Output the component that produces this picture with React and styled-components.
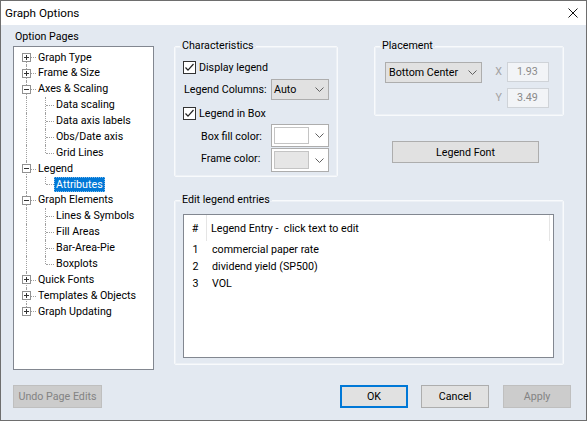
import React from 'react';
import styled, { createGlobalStyle } from 'styled-components';

const Global = createGlobalStyle`
  html, body { margin: 0; padding: 0; background: #fff; }
  body { font-family: Roboto, "Noto Sans", sans-serif; font-size: 10.7px; color: #000; }
  * { box-sizing: border-box; }
`;

const Window = styled.div`
  width: 587px;
  height: 421px;
  display: flex;
  flex-direction: column;
  border: 1px solid #6e6e6e;
  background: #e3e9f1;
  overflow: hidden;
  white-space: nowrap;
`;

const TitleBar = styled.div`
  flex: none;
  height: 24px;
  background: #fff;
  display: flex;
  align-items: center;
  justify-content: space-between;
  padding: 0 8px 0 4px;
`;

const TitleText = styled.span`
  font-size: 11.7px;
  line-height: 16px;
`;

const Content = styled.div`
  flex: 1;
  display: flex;
  flex-direction: column;
  padding: 4px 14px 0 12px;
`;

const Main = styled.div`
  display: grid;
  grid-template-columns: 141px 390px;
  column-gap: 20px;
  align-items: start;
`;

const LeftCol = styled.div`
  display: flex;
  flex-direction: column;
`;

const PageLabel = styled.div`
  line-height: 16px;
  height: 16px;
  margin: 0 0 1px 2px;
`;

const TreePanel = styled.div`
  height: 324px;
  background: #fff;
  border: 1px solid #828790;
  padding-top: 2.5px;
`;

const TreeRow = styled.div`
  display: flex;
  align-items: stretch;
  height: 15.875px;
`;

const Guide = styled.span`
  position: relative;
  flex: none;
  width: ${(p) => p.$w}px;
  &::before {
    content: '';
    display: ${(p) => (p.$v === 'none' ? 'none' : 'block')};
    position: absolute;
    left: ${(p) => p.$x}px;
    top: ${(p) => (p.$v === 'bottom' ? '50%' : '0')};
    bottom: ${(p) => (p.$v === 'top' ? '50%' : '0')};
    border-left: 1px dotted #a0a0a0;
  }
  &::after {
    content: '';
    display: ${(p) => (p.$h ? 'block' : 'none')};
    position: absolute;
    left: ${(p) => p.$x + 1}px;
    right: 0;
    top: 50%;
    border-top: 1px dotted #a0a0a0;
  }
`;

const ExpanderBox = styled.svg`
  position: absolute;
  left: 8px;
  top: calc(50% - 4.5px);
  z-index: 1;
`;

const TreeLabel = styled.span`
  line-height: 16px;
  padding: 0 2px;
  white-space: nowrap;
  color: ${(p) => (p.$sel ? '#fff' : '#000')};
  background: ${(p) => (p.$sel ? '#0078d7' : 'transparent')};
  outline: ${(p) => (p.$sel ? '1px dotted #7fbbea' : 'none')};
  outline-offset: -1px;
`;

const RightCol = styled.div`
  margin-top: 10px;
  display: flex;
  flex-direction: column;
`;

const TopRow = styled.div`
  display: flex;
  align-items: flex-start;
  gap: 36px;
`;

const Group = styled.fieldset`
  margin: 0;
  padding: 0;
  min-width: 0;
  width: ${(p) => p.$w}px;
  border: 1px solid #f8fafc;
  border-radius: 2px;
  box-shadow: inset 0 0 0 1px #edf1f6;
`;

const GroupTitle = styled.legend`
  margin-left: 5px;
  padding: 0 2px;
  line-height: 14px;
`;

const GroupBody = styled.div`
  display: flex;
  flex-direction: column;
  padding: ${(p) => p.$pad};
`;

const CheckRow = styled.label`
  display: flex;
  align-items: center;
  gap: 3px;
  height: 16px;
  margin-top: ${(p) => p.$mt || 0}px;
`;

const FieldRow = styled.div`
  display: flex;
  align-items: center;
  height: ${(p) => p.$h}px;
  margin-top: ${(p) => p.$mt || 0}px;
  padding-left: ${(p) => p.$pl || 0}px;
`;

const FieldLabel = styled.span`
  width: ${(p) => p.$w}px;
  flex: none;
  line-height: 16px;
  margin-top: ${(p) => p.$dy || 0}px;
`;

const Select = styled.div`
  display: flex;
  align-items: center;
  justify-content: space-between;
  width: ${(p) => p.$w}px;
  height: 21px;
  background: #e1e1e1;
  border: 1px solid #adadad;
  padding: 0 4px 0 ${(p) => p.$pl}px;
  line-height: 16px;
`;

const ColorCombo = styled.div`
  display: flex;
  align-items: center;
  justify-content: space-between;
  width: 58px;
  height: ${(p) => p.$h}px;
  background: #fff;
  border: 1px solid #adadad;
  padding: 0 4px 0 2px;
`;

const Swatch = styled.div`
  width: 35px;
  height: ${(p) => p.$h}px;
  background: ${(p) => p.$c};
  border: 1px solid #c4c4c4;
`;

const PlaceGrid = styled.div`
  display: grid;
  grid-template-columns: 97px 25px 42px;
  grid-template-rows: 20px 20px;
  row-gap: 6px;
  align-items: start;
`;

const PlaceSelect = styled(Select)`
  grid-column: 1;
  grid-row: 1;
`;

const AxisLabel = styled.span`
  grid-column: 2;
  grid-row: ${(p) => p.$row};
  justify-self: end;
  padding-right: 5px;
  line-height: 20px;
  color: #a3a3a3;
`;

const NumField = styled.div`
  grid-column: 3;
  grid-row: ${(p) => p.$row};
  height: 20px;
  background: #f2f4f7;
  border: 1px solid #cfd3d8;
  color: #8a8a8a;
  padding-left: 9px;
  line-height: 18px;
`;

const Button = styled.button`
  font: inherit;
  flex: none;
  width: ${(p) => p.$w}px;
  height: ${(p) => p.$h || 23}px;
  padding: 0;
  margin: ${(p) => p.$m || 0};
  white-space: nowrap;
  background: ${(p) => (p.disabled ? '#cccccc' : '#e1e1e1')};
  color: ${(p) => (p.disabled ? '#838383' : '#000')};
  border: 1px solid ${(p) => (p.$primary ? '#0078d7' : p.disabled ? '#bfbfbf' : '#adadad')};
  box-shadow: ${(p) => (p.$primary ? 'inset 0 0 0 1px #0078d7' : 'none')};
`;

const EditGroup = styled(Group)`
  margin-top: 16px;
`;

const ListBox = styled.div`
  height: 144px;
  background: #fff;
  border: 1px solid #828790;
`;

const ListHeader = styled.div`
  display: flex;
  height: 26px;
`;

const HeadCell = styled.div`
  display: flex;
  align-items: center;
  justify-content: ${(p) => (p.$center ? 'center' : 'flex-start')};
  width: ${(p) => p.$w}px;
  padding-left: ${(p) => p.$pl || 0}px;
  border-right: 1px solid #e5e5e5;
  white-space: pre;
`;

const ListRow = styled.div`
  display: flex;
  align-items: center;
  height: 17px;
`;

const NumCell = styled.span`
  width: 23px;
  text-align: center;
`;

const EntryCell = styled.span`
  padding-left: 5px;
  white-space: nowrap;
`;

const Footer = styled.div`
  display: flex;
  align-items: center;
  margin-top: 15px;
  padding-right: 1px;
`;

const Spacer = styled.div`
  flex: 1;
`;

const Chevron = () => (
  <svg width="9" height="5" viewBox="0 0 9 5">
    <polyline points="0.5,0.5 4.5,4.5 8.5,0.5" fill="none" stroke="#606060" strokeWidth="1" />
  </svg>
);

const Check = () => (
  <svg width="13" height="13" viewBox="0 0 13 13">
    <rect x="0.5" y="0.5" width="12" height="12" fill="#fff" stroke="#333" />
    <polyline points="2.5,6.5 5,9.2 10.5,3" fill="none" stroke="#222" strokeWidth="1.2" />
  </svg>
);

const Expander = ({ open }) => (
  <ExpanderBox width="9" height="9" viewBox="0 0 9 9">
    <rect x="0.5" y="0.5" width="8" height="8" fill="#fff" stroke="#919191" />
    <line x1="2" y1="4.5" x2="7" y2="4.5" stroke="#333" />
    {!open && <line x1="4.5" y1="2" x2="4.5" y2="7" stroke="#333" />}
  </ExpanderBox>
);

const CloseIcon = () => (
  <svg width="10" height="10" viewBox="0 0 10 10">
    <path d="M0.5 0.5 L9.5 9.5 M9.5 0.5 L0.5 9.5" stroke="#111" strokeWidth="1" />
  </svg>
);

const tree = [
  { t: 'Graph Type', l: 0, exp: '+' },
  { t: 'Frame & Size', l: 0, exp: '+' },
  { t: 'Axes & Scaling', l: 0, exp: '-' },
  { t: 'Data scaling', l: 1 },
  { t: 'Data axis labels', l: 1 },
  { t: 'Obs/Date axis', l: 1 },
  { t: 'Grid Lines', l: 1, last: true },
  { t: 'Legend', l: 0, exp: '-' },
  { t: 'Attributes', l: 1, last: true, sel: true },
  { t: 'Graph Elements', l: 0, exp: '-' },
  { t: 'Lines & Symbols', l: 1 },
  { t: 'Fill Areas', l: 1 },
  { t: 'Bar-Area-Pie', l: 1 },
  { t: 'Boxplots', l: 1, last: true },
  { t: 'Quick Fonts', l: 0, exp: '+' },
  { t: 'Templates & Objects', l: 0, exp: '+' },
  { t: 'Graph Updating', l: 0, exp: '+' },
];

const entries = ['commercial paper rate', 'dividend yield (SP500)', 'VOL'];

export default function App() {
  return (
    <>
      <Global />
      <Window>
        <TitleBar>
          <TitleText>Graph Options</TitleText>
          <CloseIcon />
        </TitleBar>
        <Content>
          <Main>
            <LeftCol>
              <PageLabel>Option Pages</PageLabel>
              <TreePanel>
                {tree.map((n, i) => {
                  const isFirst = i === 0;
                  const isLast = i === tree.length - 1;
                  if (n.l === 0) {
                    return (
                      <TreeRow key={n.t}>
                        <Guide $w={22} $x={12} $v={isFirst ? 'bottom' : isLast ? 'top' : 'full'} $h>
                          <Expander open={n.exp === '-'} />
                        </Guide>
                        <TreeLabel>{n.t}</TreeLabel>
                      </TreeRow>
                    );
                  }
                  return (
                    <TreeRow key={n.t}>
                      <Guide $w={22} $x={12} $v="full" />
                      <Guide $w={18} $x={9} $v={n.last ? 'top' : 'full'} $h />
                      <TreeLabel $sel={n.sel}>{n.t}</TreeLabel>
                    </TreeRow>
                  );
                })}
              </TreePanel>
            </LeftCol>

            <RightCol>
              <TopRow>
                <Group $w={164}>
                  <GroupTitle>Characteristics</GroupTitle>
                  <GroupBody $pad="6px 4px 4px 8px">
                    <CheckRow>
                      <Check />
                      <span>Display legend</span>
                    </CheckRow>
                    <FieldRow $h={21} $mt={4} $pl={1}>
                      <FieldLabel $w={87}>Legend Columns:</FieldLabel>
                      <Select $w={58} $pl={2}>
                        <span>Auto</span>
                        <Chevron />
                      </Select>
                    </FieldRow>
                    <CheckRow $mt={5}>
                      <Check />
                      <span>Legend in Box</span>
                    </CheckRow>
                    <FieldRow $h={23} $mt={3} $pl={18}>
                      <FieldLabel $w={70} $dy={2}>Box fill color:</FieldLabel>
                      <ColorCombo $h={23}>
                        <Swatch $h={17} $c="#ffffff" />
                        <Chevron />
                      </ColorCombo>
                    </FieldRow>
                    <FieldRow $h={24} $mt={1} $pl={18}>
                      <FieldLabel $w={70} $dy={-3}>Frame color:</FieldLabel>
                      <ColorCombo $h={24}>
                        <Swatch $h={18} $c="#e6e6e6" />
                        <Chevron />
                      </ColorCombo>
                    </FieldRow>
                  </GroupBody>
                </Group>

                <div>
                  <Group $w={190}>
                    <GroupTitle>Placement</GroupTitle>
                    <GroupBody $pad="9px 10px 7px 10px">
                      <PlaceGrid>
                        <PlaceSelect $w={97} $pl={3}>
                          <span>Bottom Center</span>
                          <Chevron />
                        </PlaceSelect>
                        <AxisLabel $row={1}>X</AxisLabel>
                        <NumField $row={1}>1.93</NumField>
                        <AxisLabel $row={2}>Y</AxisLabel>
                        <NumField $row={2}>3.49</NumField>
                      </PlaceGrid>
                    </GroupBody>
                  </Group>
                  <Button $w={147} $h={22} $m="25px 0 0 18px">Legend Font</Button>
                </div>
              </TopRow>

              <EditGroup $w={390}>
                <GroupTitle>Edit legend entries</GroupTitle>
                <GroupBody $pad="7px 9px 6px 8px">
                  <ListBox>
                    <ListHeader>
                      <HeadCell $w={23} $center>#</HeadCell>
                      <HeadCell $w={343} $pl={4}>{'Legend Entry -  click text to edit'}</HeadCell>
                    </ListHeader>
                    {entries.map((e, i) => (
                      <ListRow key={e}>
                        <NumCell>{i + 1}</NumCell>
                        <EntryCell>{e}</EntryCell>
                      </ListRow>
                    ))}
                  </ListBox>
                </GroupBody>
              </EditGroup>
            </RightCol>
          </Main>

          <Footer>
            <Button $w={89} disabled>Undo Page Edits</Button>
            <Spacer />
            <Button $w={68} $primary>OK</Button>
            <Button $w={68} $m="0 0 0 13px">Cancel</Button>
            <Button $w={68} $m="0 0 0 14px" disabled>Apply</Button>
          </Footer>
        </Content>
      </Window>
    </>
  );
}
